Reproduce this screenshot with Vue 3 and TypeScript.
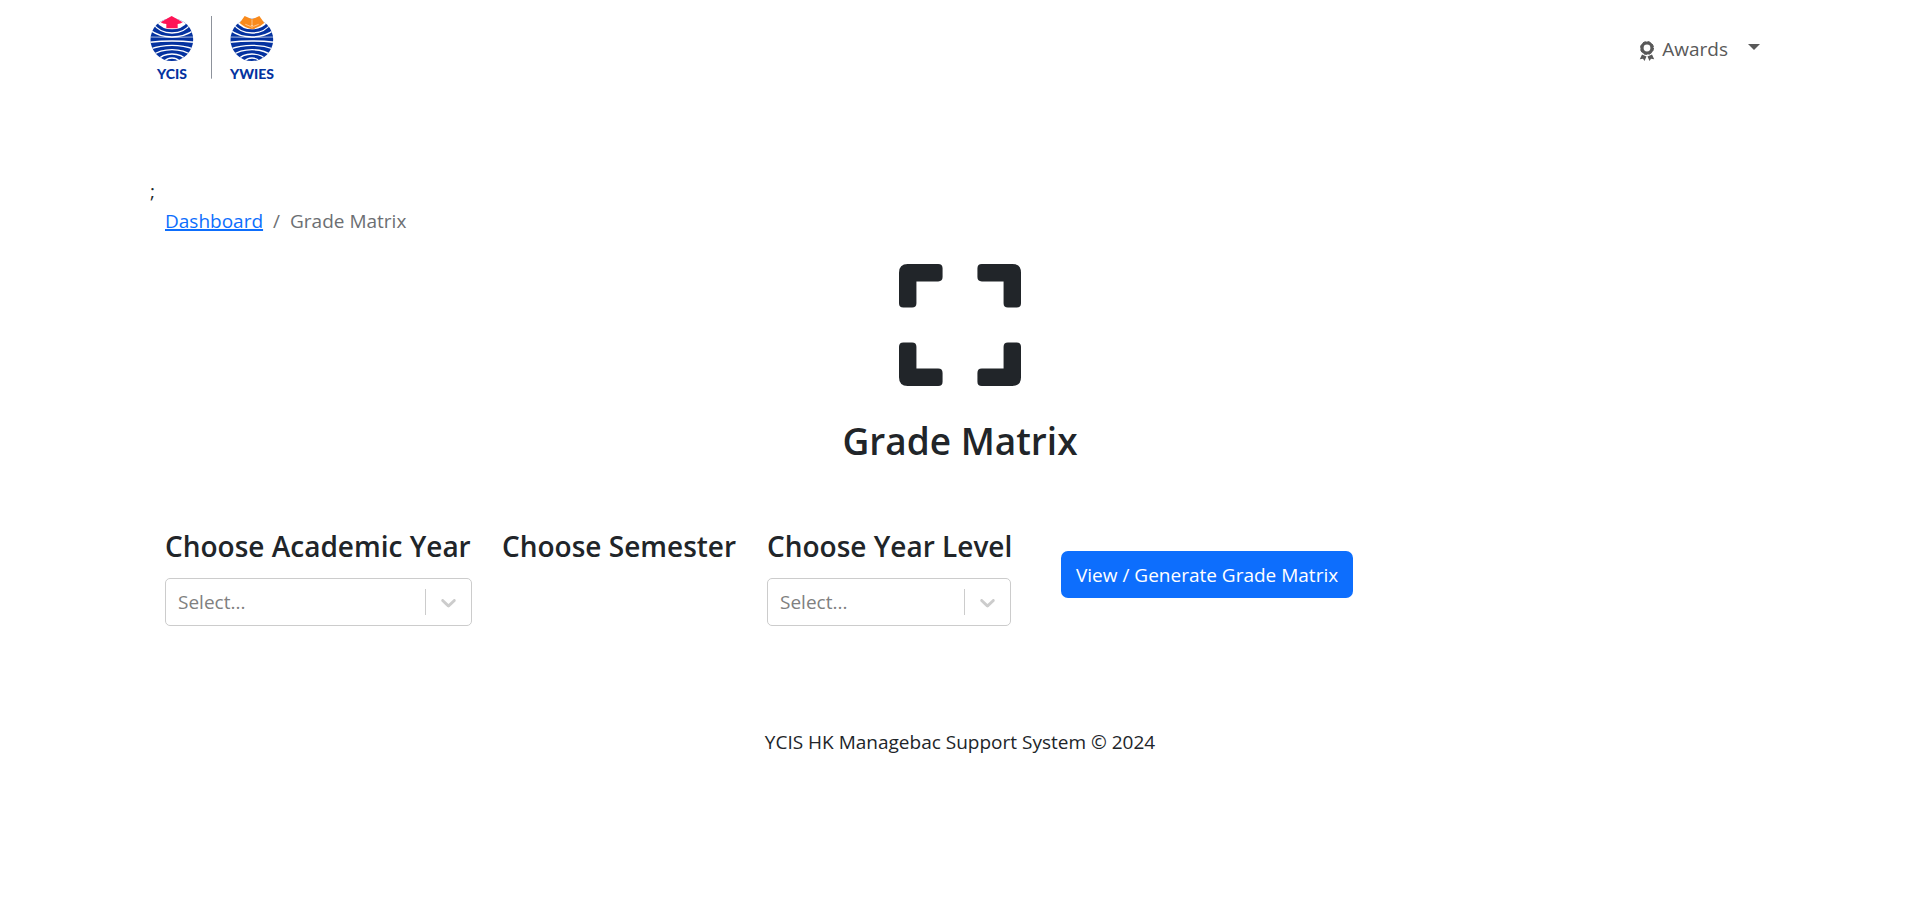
<script setup lang="ts">
import { ref } from 'vue'

interface Filter {
  id: string
  label: string
  hasSelect: boolean
}

const filters: Filter[] = [
  { id: 'academic-year', label: 'Choose Academic Year', hasSelect: true },
  { id: 'semester', label: 'Choose Semester', hasSelect: false },
  { id: 'year-level', label: 'Choose Year Level', hasSelect: true },
]

const selected = ref<Record<string, string>>({ 'academic-year': '', 'year-level': '' })

const logos = [
  { name: 'YCIS', shift: 0, textX: 96 },
  { name: 'YWIES', shift: 240, textX: 96 },
]
</script>

<template>
  <div class="page">
    <header class="navbar container">
      <a class="brand" href="#" aria-label="Home">
        <svg class="brand-logo" viewBox="0 0 450 255" role="img">
          <defs>
            <clipPath id="globe"><circle cx="95.500" cy="104" r="64" /></clipPath>
          </defs>
          <g v-for="logo in logos" :key="logo.name" :transform="`translate(${logo.shift} 0)`">
            <g clip-path="url(#globe)">
              <rect x="30" y="36" width="132" height="134" fill="#0432a0" />
              <path d="M48 30H144V50Q126 73 96 73Q66 73 48 50Z" fill="#fff" />
              <g fill="none" stroke="#fff" stroke-width="4">
                <path d="M38 54Q58 84 96 84T154 54" />
                <path d="M28 74Q58 96 96 96T164 74" />
                <path d="M28 96Q96 98 164 96" stroke-width="2" />
                <path d="M28 112Q62 108 96 108T164 112" />
                <path d="M28 133Q60 121 96 121T164 133" />
                <path d="M34 153Q60 134 96 134T158 153" />
                <path d="M50 168Q66 147 96 147T142 168" />
                <path d="M72 174Q77 159 96 159T120 174" />
              </g>
            </g>
            <path
              v-if="logo.name === 'YCIS'"
              d="M95 33L128 52Q121 57 113 57V70H79V57Q69 57 62 52Z"
              fill="#ff1456"
            />
            <g v-else>
              <path
                d="M74 33L96 43L118 33L133 54Q118 68 96 73Q74 68 59 54Z"
                fill="#f98a1c"
              />
              <path
                d="M76 58L91 64L96 61L101 64L116 58M96 44V70"
                fill="none"
                stroke="#fff"
                stroke-width="1.500"
              />
            </g>
            <text :x="logo.textX" y="221" text-anchor="middle" class="brand-text">{{ logo.name }}</text>
          </g>
          <path d="M214.500 33V221" stroke="#8d929b" stroke-width="3" />
        </svg>
      </a>
      <button class="nav-toggle" type="button" aria-haspopup="true">
        <svg class="award" viewBox="0 0 16 20" aria-hidden="true">
          <circle cx="8" cy="7" r="5" fill="none" stroke="currentColor" stroke-width="3.200" />
          <circle
            cx="8"
            cy="7"
            r="6.500"
            fill="none"
            stroke="currentColor"
            stroke-width="1"
            stroke-dasharray="3 2.100"
          />
          <path
            d="M3 13.500L7.500 15.500L5.500 20L4 17.800L0.800 18.300ZM13 13.500L8.500 15.500L10.500 20L12 17.800L15.200 18.300Z"
            fill="currentColor"
          />
        </svg>
        <span class="nav-label">Awards</span>
        <span class="caret"></span>
      </button>
    </header>

    <main class="container">
      <div>;</div>
      <div class="content">
        <nav aria-label="breadcrumb">
          <ol class="breadcrumb">
            <li><a href="#">Dashboard</a></li>
            <li class="slash" aria-hidden="true">/</li>
            <li aria-current="page">Grade Matrix</li>
          </ol>
        </nav>

        <div class="hero">
          <svg class="hero-icon" viewBox="0 0 14 14" aria-hidden="true">
            <path
              d="M0 4.500V1Q0 0 1 0H4.500Q5 0 5 0.500V1.500Q5 2 4.500 2H2V4.500Q2 5 1.500 5H0.500Q0 5 0 4.500ZM9 1.500V0.500Q9 0 9.500 0H13Q14 0 14 1V4.500Q14 5 13.500 5H12.500Q12 5 12 4.500V2H9.500Q9 2 9 1.500ZM13.500 9Q14 9 14 9.500V13Q14 14 13 14H9.500Q9 14 9 13.500V12.500Q9 12 9.500 12H12V9.500Q12 9 12.500 9ZM5 12.500V13.500Q5 14 4.500 14H1Q0 14 0 13V9.500Q0 9 0.500 9H1.500Q2 9 2 9.500V12H4.500Q5 12 5 12.500Z"
            />
          </svg>
          <h1>Grade Matrix</h1>
        </div>

        <form class="filters" @submit.prevent>
          <div v-for="filter in filters" :key="filter.id" class="filter">
            <h4>
              <label v-if="filter.hasSelect" :for="filter.id">{{ filter.label }}</label>
              <template v-else>{{ filter.label }}</template>
            </h4>
            <div v-if="filter.hasSelect" class="control">
              <select :id="filter.id" v-model="selected[filter.id]">
                <option value="">Select...</option>
              </select>
              <span class="indicator">
                <svg viewBox="0 0 20 20" aria-hidden="true">
                  <path
                    d="M4.516 7.548c0.436-0.446 1.043-0.481 1.576 0l3.908 3.747 3.908-3.747c0.533-0.481 1.141-0.446 1.574 0 0.436 0.445 0.408 1.197 0 1.615-0.406 0.418-4.695 4.502-4.695 4.502-0.217 0.223-0.502 0.335-0.787 0.335s-0.570-0.112-0.789-0.335c0 0-4.287-4.084-4.695-4.502s-0.436-1.170 0-1.615z"
                  />
                </svg>
              </span>
            </div>
          </div>
          <button class="submit" type="submit">View / Generate Grade Matrix</button>
        </form>
      </div>
    </main>

    <footer>YCIS HK Managebac Support System © 2024</footer>
  </div>
</template>

<style>
body {
  background: #fff;
}
</style>

<style scoped>
.page {
  color: #212529;
  font-family: "Segoe UI", "Open Sans", "Noto Sans", sans-serif;
  font-size: 19px;
  line-height: 30px;
}

.page *,
.page {
  box-sizing: border-box;
}

.container {
  max-width: 1650px;
  margin: 0 auto;
  padding: 0 15px;
}

.navbar {
  display: flex;
  justify-content: space-between;
  height: 176px;
}

.brand {
  margin: 5px 0 0 -10px;
}

.brand-logo {
  display: block;
  width: 150px;
  height: 85px;
}

.brand-text {
  fill: #0432a0;
  font: 900 42px Lato, sans-serif;
}

.nav-toggle {
  display: flex;
  align-items: center;
  height: 30px;
  margin-top: 34px;
  padding: 0 10px 0 0;
  border: 0;
  background: none;
  color: #595959;
  font: inherit;
}

.award {
  width: 16px;
  height: 20px;
  margin-top: 4px;
}

.nav-label {
  margin-left: 7px;
}

.caret {
  margin: 0 0 4px 20px;
  border: 6px solid transparent;
  border-top-color: currentColor;
  border-bottom: 0;
}

.content {
  padding: 0 15px;
}

.breadcrumb {
  display: flex;
  gap: 10px;
  margin: 0 0 28px;
  padding: 0;
  list-style: none;
  color: #6c6f73;
}

.breadcrumb a {
  color: #0d6efd;
  text-decoration-thickness: 2px;
}

.hero {
  display: flex;
  flex-direction: column;
  align-items: center;
}

.hero-icon {
  width: 122px;
  height: 122px;
  fill: #212529;
}

h1 {
  margin: 31px 0 0;
  font-size: 37px;
  font-weight: 600;
  line-height: 48px;
}

.filters {
  display: grid;
  grid-template-columns: 307px 235px 244px max-content;
  column-gap: 30px;
  margin-top: 63px;
}

h4 {
  margin: 0 0 14px;
  font-size: 28px;
  font-weight: 600;
  line-height: 36px;
  white-space: nowrap;
}

.control {
  position: relative;
}

select {
  display: block;
  width: 100%;
  height: 48px;
  padding: 0 60px 0 12px;
  appearance: none;
  border: 1px solid #ccc;
  border-radius: 5px;
  background: #fff;
  color: #808080;
  font: inherit;
}

.indicator {
  position: absolute;
  top: 11px;
  right: 1px;
  display: flex;
  align-items: center;
  height: 26px;
  padding: 0 10px;
  border-left: 1px solid #ccc;
  pointer-events: none;
}

.indicator svg {
  width: 25px;
  height: 25px;
  fill: #ccc;
}

.submit {
  height: 47px;
  margin: 23px 0 0 20px;
  padding: 0 15px;
  border: 0;
  border-radius: 7px;
  background: #0d6efd;
  color: #fff;
  font: inherit;
}

footer {
  margin-top: 101px;
  text-align: center;
}
</style>
